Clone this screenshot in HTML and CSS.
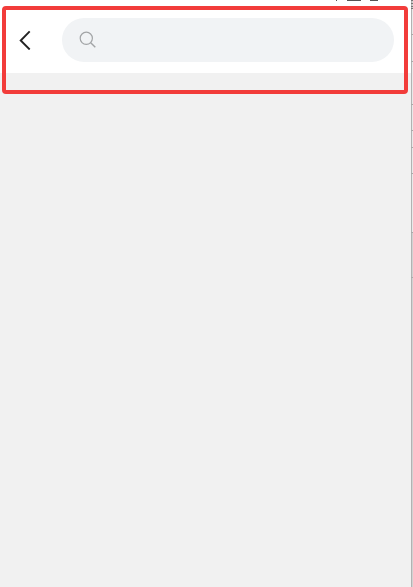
FILE: index.html
```html
<!DOCTYPE html>
<html lang="en">
<head>
<meta charset="utf-8">
<meta name="viewport" content="width=device-width, initial-scale=1">
<title>Search</title>
<link rel="stylesheet" href="styles.css">
</head>
<body>
<div class="screen">
  <header class="topbar">
    <svg class="status" width="48" height="2" viewBox="0 0 48 2" aria-hidden="true">
      <path d="M3 0h1v1H3zM14 0h14v1H14zM37 0h8v1H37z" fill="#555"/>
    </svg>
    <button class="back" type="button" aria-label="Back">
      <svg width="14" height="20" viewBox="0 0 14 20" aria-hidden="true">
        <path d="M11.7 1.3 2.7 10.5l9 9" fill="none" stroke="#222" stroke-width="1.9"/>
      </svg>
    </button>
    <label class="search">
      <svg width="18" height="18" viewBox="0 0 18 18" aria-hidden="true">
        <circle cx="7.3" cy="7.3" r="6.1" fill="none" stroke="#a2a4a6" stroke-width="1.2"/>
        <path d="m11.7 11.7 4.6 4.6" fill="none" stroke="#a2a4a6" stroke-width="1.4"/>
      </svg>
      <input class="search-input" type="search" aria-label="Search">
    </label>
  </header>
  <main class="content"></main>
  <div class="highlight"></div>
</div>
<div class="edge">
  <svg width="2" height="300" viewBox="0 0 2 300" aria-hidden="true">
    <path d="M0 0h2v1H0zM0 3h2v1H0zM0 6h2v1H0zM0 8h2v1H0z" fill="#777"/>
    <path d="M1 9h1v223H1z" fill="#e9e9e9"/>
    <path d="M0 34h2v1H0zM0 61h2v1H0zM0 104h2v1H0zM0 130h2v1H0zM0 147h2v1H0zM0 173h2v1H0zM0 232h2v1H0zM0 277h2v1H0z" fill="#aaa"/>
  </svg>
</div>
</body>
</html>
```
FILE: styles.css
```css
* {
  box-sizing: border-box;
}

body {
  display: flex;
  min-height: 100vh;
  margin: 0;
  background: #f1f1f1;
  font-family: "Liberation Sans", sans-serif;
}

.screen {
  position: relative;
  display: flex;
  flex: 1;
  flex-direction: column;
}

.topbar {
  position: relative;
  display: flex;
  align-items: center;
  gap: 20px;
  padding: 18px 17px 11px 14px;
  background: #fff;
}

.status {
  position: absolute;
  top: 0;
  right: 30px;
}

.back {
  display: flex;
  align-items: center;
  width: 28px;
  height: 44px;
  padding: 0 4px;
  border: 0;
  background: none;
}

.search {
  display: flex;
  flex: 1;
  align-items: center;
  gap: 8px;
  height: 44px;
  padding: 0 17px;
  border-radius: 22px;
  background: #f1f3f5;
}

.search-input {
  flex: 1;
  min-width: 0;
  padding: 0;
  border: 0;
  outline: 0;
  background: none;
  color: #222;
  font: 16px "Liberation Sans", sans-serif;
}

.content {
  flex: 1;
}

.highlight {
  position: absolute;
  top: 6px;
  right: 3px;
  left: 2px;
  height: 88px;
  border: 4px solid #f23c3a;
  border-radius: 4px;
  pointer-events: none;
}

.edge {
  width: 2px;
  background: linear-gradient(to right, #b2b2b2 50%, #d2d2d2 50%);
}

.edge svg {
  display: block;
}
```
